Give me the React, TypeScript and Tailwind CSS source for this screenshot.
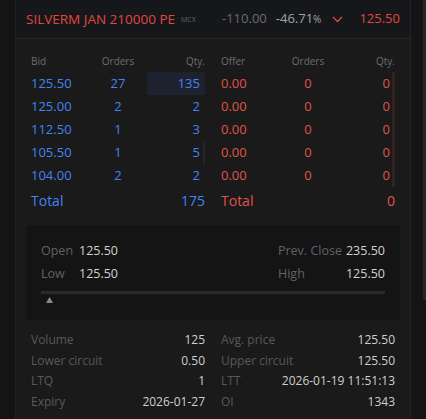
import React from "react";

const bids = [
  { price: "125.50", orders: "27", qty: "135", hi: true },
  { price: "125.00", orders: "2", qty: "2" },
  { price: "112.50", orders: "1", qty: "3" },
  { price: "105.50", orders: "1", qty: "5", tick: true },
  { price: "104.00", orders: "2", qty: "2" },
];

const stats: [string, string, string, string][] = [
  ["Volume", "125", "Avg. price", "125.50"],
  ["Lower circuit", "0.50", "Upper circuit", "125.50"],
  ["LTQ", "1", "LTT", "2026-01-19 11:51:13"],
  ["Expiry", "2026-01-27", "OI", "1343"],
];

export default function App() {
  return (
    <div
      className="flex h-[419px] w-[426px] overflow-hidden bg-[#141414]"
      style={{ fontFamily: '"Open Sans", "Noto Sans", sans-serif' }}
    >
      {/* left gutter */}
      <div className="w-[16px] shrink-0 border-r border-[#202020]" />

      {/* main panel */}
      <div className="flex w-[394px] shrink-0 flex-col bg-[#1a1a1a]">
        {/* header */}
        <div className="flex h-[39px] shrink-0 items-center border-b border-[#262626] bg-[#16171a] pl-[10px] pr-[10px]">
          <div className="flex w-[196px] shrink-0 items-center">
            <span className="text-[13.5px] text-[#e0473f]">SILVERM JAN 210000 PE</span>
            <span className="ml-[6px] mt-[3px] text-[7px] text-[#666]">MCX</span>
          </div>
          <span className="text-[13px] text-[#6c6c6c]">-110.00</span>
          <span className="ml-[9px] text-[13px] text-[#a3a3a3]">
            -46.71<span className="text-[10px]">%</span>
          </span>
          <svg className="ml-[11px]" width="11" height="7" viewBox="0 0 11 7" fill="none">
            <path d="M1 1l4.5 4.5L10 1" stroke="#e0473f" strokeWidth="1.3" />
          </svg>
          <span className="ml-auto text-[13px] text-[#e0473f]">125.50</span>
        </div>

        {/* market depth */}
        <div className="grid grid-cols-2 gap-x-[16px] px-[15px] pt-[11px]">
          {/* bid side */}
          <div>
            <div className="grid h-[22px] grid-cols-3 items-center text-[10px] text-[#6b6e73]">
              <span>Bid</span>
              <span className="text-center">Orders</span>
              <span className="text-right">Qty.</span>
            </div>
            {bids.map((b, i) => (
              <div key={i} className="grid h-[23px] grid-cols-3 items-center text-[13px] text-[#4184f3]">
                <span>{b.price}</span>
                <span className="text-center">{b.orders}</span>
                <span
                  className={`relative flex h-full items-center justify-end pr-[5px] ${b.hi ? "bg-[#1e2230]" : ""}`}
                >
                  {b.qty}
                  {b.tick && <span className="absolute right-0 top-0 h-full w-[2px] bg-[#232529]" />}
                </span>
              </div>
            ))}
            <div className="mt-[2px] flex h-[22px] items-center justify-between text-[14px] text-[#4184f3]">
              <span>Total</span>
              <span>175</span>
            </div>
          </div>

          {/* offer side */}
          <div>
            <div className="grid h-[22px] grid-cols-3 items-center text-[10px] text-[#6b6e73]">
              <span>Offer</span>
              <span className="text-center">Orders</span>
              <span className="text-right">Qty.</span>
            </div>
            {bids.map((_, i) => (
              <div key={i} className="grid h-[23px] grid-cols-3 items-center text-[13px] text-[#e0534b]">
                <span>0.00</span>
                <span className="text-center">0</span>
                <span className="relative flex h-full items-center justify-end pr-[5px]">
                  0
                  <span className="absolute right-0 top-0 h-full w-[3px] bg-[#33221e]" />
                </span>
              </div>
            ))}
            <div className="mt-[2px] flex h-[22px] items-center justify-between text-[14px] text-[#e0534b]">
              <span>Total</span>
              <span>0</span>
            </div>
          </div>
        </div>

        {/* OHLC box */}
        <div className="mx-[10px] mt-[14px] h-[95px] shrink-0 bg-[#141414] px-[15px] pt-[17px]">
          <div className="flex justify-between text-[12.5px]">
            <div className="grid grid-cols-[38px_auto] gap-y-[4px]">
              <span className="text-[#5f6268]">Open</span>
              <span className="text-[#d2d2d2]">125.50</span>
              <span className="text-[#5f6268]">Low</span>
              <span className="text-[#d2d2d2]">125.50</span>
            </div>
            <div className="grid grid-cols-[68px_auto] gap-y-[4px]">
              <span className="text-[#5f6268]">Prev. Close</span>
              <span className="text-right text-[#d2d2d2]">235.50</span>
              <span className="text-[#5f6268]">High</span>
              <span className="text-right text-[#d2d2d2]">125.50</span>
            </div>
          </div>
          <div className="mt-[7px] h-[3px] bg-[#2a2a2a]" />
          <svg className="ml-[5px] mt-[3px]" width="7" height="6" viewBox="0 0 7 6">
            <path d="M3.5 0L7 6H0z" fill="#8a8a8a" />
          </svg>
        </div>

        {/* stats */}
        <div className="grid grid-cols-2 gap-x-[16px] px-[15px] pt-[10px] text-[12px]">
          {stats.map((r, i) => (
            <React.Fragment key={i}>
              <div className="flex h-[20.6px] items-center justify-between">
                <span className="text-[#595959]">{r[0]}</span>
                <span className="text-[#cfcfcf]">{r[1]}</span>
              </div>
              <div className="flex h-[20.6px] items-center justify-between">
                <span className="text-[#595959]">{r[2]}</span>
                <span className="text-[#cfcfcf]">{r[3]}</span>
              </div>
            </React.Fragment>
          ))}
        </div>
      </div>

      {/* right gutter */}
      <div className="flex flex-1 justify-end border-l border-[#242424]">
        <div className="h-[300px] w-[3px] bg-[#262626]" />
      </div>
    </div>
  );
}
